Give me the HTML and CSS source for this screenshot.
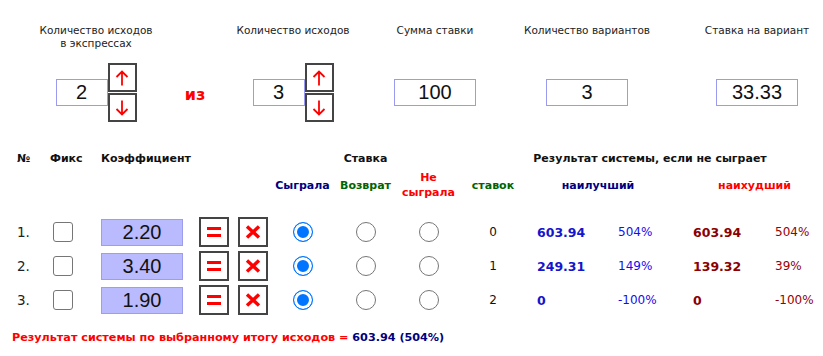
FILE: index.html
```html
<!DOCTYPE html>
<html lang="ru">
<head>
<meta charset="utf-8">
<title>Калькулятор системы</title>
<link rel="stylesheet" href="styles.css">
</head>
<body>
<div class="top">
  <div class="lbl">Количество исходов<br>в экспрессах</div>
  <div class="lbl"></div>
  <div class="lbl">Количество исходов</div>
  <div class="lbl">Сумма ставки</div>
  <div class="lbl">Количество вариантов</div>
  <div class="lbl last">Ставка на вариант</div>

  <div class="spin">
    <input class="num small" type="text" value="2" readonly>
    <div class="arrows">
      <button class="abtn"><svg width="14" height="16" viewBox="0 0 14 16"><path d="M7 15.5V1.5M1.5 7L7 1.5 12.5 7" fill="none" stroke="#f00" stroke-width="1.8"/></svg></button>
      <button class="abtn"><svg width="14" height="16" viewBox="0 0 14 16"><path d="M7 0.5v14M1.5 9L7 14.5 12.5 9" fill="none" stroke="#f00" stroke-width="1.8"/></svg></button>
    </div>
  </div>
  <div class="iz">из</div>
  <div class="spin">
    <input class="num small" type="text" value="3" readonly>
    <div class="arrows">
      <button class="abtn"><svg width="14" height="16" viewBox="0 0 14 16"><path d="M7 15.5V1.5M1.5 7L7 1.5 12.5 7" fill="none" stroke="#f00" stroke-width="1.8"/></svg></button>
      <button class="abtn"><svg width="14" height="16" viewBox="0 0 14 16"><path d="M7 0.5v14M1.5 9L7 14.5 12.5 9" fill="none" stroke="#f00" stroke-width="1.8"/></svg></button>
    </div>
  </div>
  <div class="cell"><input class="num wide" type="text" value="100" readonly></div>
  <div class="cell"><input class="num wide" type="text" value="3" readonly></div>
  <div class="cell last"><input class="num wide" type="text" value="33.33" readonly></div>
</div>

<table class="sys">
  <colgroup>
    <col class="w33"><col class="w50"><col class="w100"><col class="w39"><col class="w37"><col class="w63"><col class="w63"><col class="w63"><col class="w66"><col class="w86"><col class="w68"><col class="w90"><col class="w53">
  </colgroup>
  <tr class="h1">
    <th class="c-no">№</th>
    <th class="c-fix">Фикс</th>
    <th class="c-k">Коэффициент</th>
    <th colspan="2"></th>
    <th colspan="3" class="ctr">Ставка</th>
    <th colspan="5" class="res">Результат системы, если не сыграет</th>
  </tr>
  <tr class="h2">
    <th colspan="5"></th>
    <th class="ctr navy">Сыграла</th>
    <th class="ctr green">Возврат</th>
    <th class="ctr red">Не<br>сыграла</th>
    <th class="ctr green">ставок</th>
    <th colspan="2" class="ctr navy best">наилучший</th>
    <th colspan="2" class="ctr red worst">наихудший</th>
  </tr>
  <tr class="row">
    <td class="c-no">1.</td>
    <td class="c-fix"><input class="chk" type="checkbox"></td>
    <td class="c-k"><input class="coef" type="text" value="2.20" readonly></td>
    <td class="c-b"><button class="sq"><svg width="14" height="11" viewBox="0 0 14 11"><rect x="0" y="0" width="14" height="3" fill="#f00"/><rect x="0" y="7" width="14" height="3" fill="#f00"/></svg></button></td>
    <td class="c-b"><button class="sq"><svg width="16" height="14" viewBox="0 0 16 14"><path d="M2 1.5l12 11M14 1.5l-12 11" stroke="#f00" stroke-width="3.4" fill="none"/></svg></button></td>
    <td class="ctr"><input class="rad" type="radio" name="r1" checked></td>
    <td class="ctr"><input class="rad" type="radio" name="r1"></td>
    <td class="ctr"><input class="rad" type="radio" name="r1"></td>
    <td class="ctr cnt">0</td>
    <td class="bv">603.94</td>
    <td class="bp">504%</td>
    <td class="wv">603.94</td>
    <td class="wp">504%</td>
  </tr>
  <tr class="row">
    <td class="c-no">2.</td>
    <td class="c-fix"><input class="chk" type="checkbox"></td>
    <td class="c-k"><input class="coef" type="text" value="3.40" readonly></td>
    <td class="c-b"><button class="sq"><svg width="14" height="11" viewBox="0 0 14 11"><rect x="0" y="0" width="14" height="3" fill="#f00"/><rect x="0" y="7" width="14" height="3" fill="#f00"/></svg></button></td>
    <td class="c-b"><button class="sq"><svg width="16" height="14" viewBox="0 0 16 14"><path d="M2 1.5l12 11M14 1.5l-12 11" stroke="#f00" stroke-width="3.4" fill="none"/></svg></button></td>
    <td class="ctr"><input class="rad" type="radio" name="r2" checked></td>
    <td class="ctr"><input class="rad" type="radio" name="r2"></td>
    <td class="ctr"><input class="rad" type="radio" name="r2"></td>
    <td class="ctr cnt">1</td>
    <td class="bv">249.31</td>
    <td class="bp">149%</td>
    <td class="wv">139.32</td>
    <td class="wp">39%</td>
  </tr>
  <tr class="row">
    <td class="c-no">3.</td>
    <td class="c-fix"><input class="chk" type="checkbox"></td>
    <td class="c-k"><input class="coef" type="text" value="1.90" readonly></td>
    <td class="c-b"><button class="sq"><svg width="14" height="11" viewBox="0 0 14 11"><rect x="0" y="0" width="14" height="3" fill="#f00"/><rect x="0" y="7" width="14" height="3" fill="#f00"/></svg></button></td>
    <td class="c-b"><button class="sq"><svg width="16" height="14" viewBox="0 0 16 14"><path d="M2 1.5l12 11M14 1.5l-12 11" stroke="#f00" stroke-width="3.4" fill="none"/></svg></button></td>
    <td class="ctr"><input class="rad" type="radio" name="r3" checked></td>
    <td class="ctr"><input class="rad" type="radio" name="r3"></td>
    <td class="ctr"><input class="rad" type="radio" name="r3"></td>
    <td class="ctr cnt">2</td>
    <td class="bv">0</td>
    <td class="bp">-100%</td>
    <td class="wv">0</td>
    <td class="wp">-100%</td>
  </tr>
</table>

<div class="total">Результат системы по выбранному итогу исходов = <span class="tv">603.94 (504%)</span></div>
</body>
</html>
```

FILE: styles.css
```css
html, body {
  margin: 0;
  padding: 0;
  background: #fff;
  overflow: hidden;
}
body {
  font-family: "DejaVu Sans", Verdana, sans-serif;
  color: #1a1a1a;
}

.top {
  display: grid;
  grid-template-columns: 130px 68px 128px 156px 148px 161px;
  padding: 24px 0 0 31px;
  row-gap: 13px;
  justify-items: center;
  align-items: center;
}
.lbl {
  align-self: start;
  font-size: 10.5px;
  line-height: 13px;
  text-align: center;
  color: #222;
}
.last {
  padding-left: 31px;
}
.spin {
  display: flex;
  align-items: center;
}
.arrows {
  display: flex;
  flex-direction: column;
  gap: 1px;
}
.abtn {
  width: 29px;
  height: 29px;
  padding: 0;
  margin: 0;
  border: 2px solid #444;
  background: #fff;
  display: flex;
  align-items: center;
  justify-content: center;
}
.num {
  box-sizing: border-box;
  height: 27px;
  border: 1px solid #9a9af0;
  background: #fff;
  font-family: "Liberation Sans", Arial, sans-serif;
  font-size: 20px;
  color: #111;
  text-align: center;
  padding: 0;
  margin: 0;
  outline: none;
}
.num.small { width: 52px; }
.num.wide { width: 82px; }
.iz {
  color: #f00;
  font-weight: bold;
  font-size: 16px;
  padding-top: 3px;
}

.sys {
  margin: 24px 0 0 12px;
  width: 811px;
  table-layout: fixed;
  border-collapse: collapse;
  border-spacing: 0;
}
.w33 { width: 33px; }
.w50 { width: 50px; }
.w100 { width: 100px; }
.w39 { width: 39px; }
.w37 { width: 37px; }
.w63 { width: 63px; }
.w66 { width: 66px; }
.w86 { width: 86px; }
.w68 { width: 68px; }
.w90 { width: 90px; }
.w53 { width: 53px; }
.sys th, .sys td {
  padding: 0;
}
.sys th {
  font-size: 11px;
  font-weight: bold;
  text-align: left;
  color: #111;
  white-space: nowrap;
}
.h1 th { height: 24px; }
.h2 th { height: 30px; line-height: 15px; padding-bottom: 15px; }
.c-no { padding-left: 5px !important; }
.c-fix { padding-left: 5px !important; }
.c-k { padding-left: 6px !important; }
.ctr { text-align: center !important; }
.res { padding-left: 17px !important; text-align: center !important; }
.navy { color: #000080 !important; }
.green { color: #006400 !important; }
.red { color: #f00 !important; }
.best { padding-right: 10px !important; }
.worst { padding-left: 6px !important; }

.row td {
  height: 34px;
  vertical-align: middle;
  font-size: 12px;
}
.row td.c-no {
  font-size: 13.5px;
  color: #222;
}
.chk {
  appearance: none;
  -webkit-appearance: none;
  box-sizing: border-box;
  width: 20px;
  height: 20px;
  margin: 0 0 0 3px;
  border: 1px solid #767676;
  border-radius: 3px;
  background: #fff;
  vertical-align: middle;
}
.coef {
  box-sizing: border-box;
  width: 82px;
  height: 27px;
  border: 1px solid #9d9dee;
  background: #babaff;
  font-family: "Liberation Sans", Arial, sans-serif;
  font-size: 20px;
  color: #111;
  text-align: center;
  padding: 0;
  margin: 0;
  outline: none;
  vertical-align: middle;
}
.c-b { padding-left: 4px !important; }
.sq {
  box-sizing: border-box;
  width: 30px;
  height: 30px;
  padding: 0;
  margin: 0;
  border: 2px solid #444;
  background: #fff;
  display: flex;
  align-items: center;
  justify-content: center;
}
.rad {
  appearance: none;
  -webkit-appearance: none;
  box-sizing: border-box;
  width: 20px;
  height: 20px;
  margin: 0;
  border: 1px solid #767676;
  border-radius: 50%;
  background: #fff;
  vertical-align: middle;
}
.rad:checked {
  border: 1px solid #0075ff;
  background: #0075ff;
  box-shadow: inset 0 0 0 3px #fff;
}
.cnt { color: #111; }
.bv { padding-left: 11px !important; font-weight: bold; color: #1515cc; font-size: 12.5px !important; }
.bp { padding-left: 6px !important; color: #1010ee; }
.wv { padding-left: 13px !important; font-weight: bold; color: #8b0000; font-size: 12.5px !important; }
.wp { padding-left: 5px !important; color: #990000; }

.total {
  margin: 14px 0 0 12px;
  font-size: 11.2px;
  font-weight: bold;
  color: #f00;
  line-height: 14px;
}
.tv { color: #000080; }
```
